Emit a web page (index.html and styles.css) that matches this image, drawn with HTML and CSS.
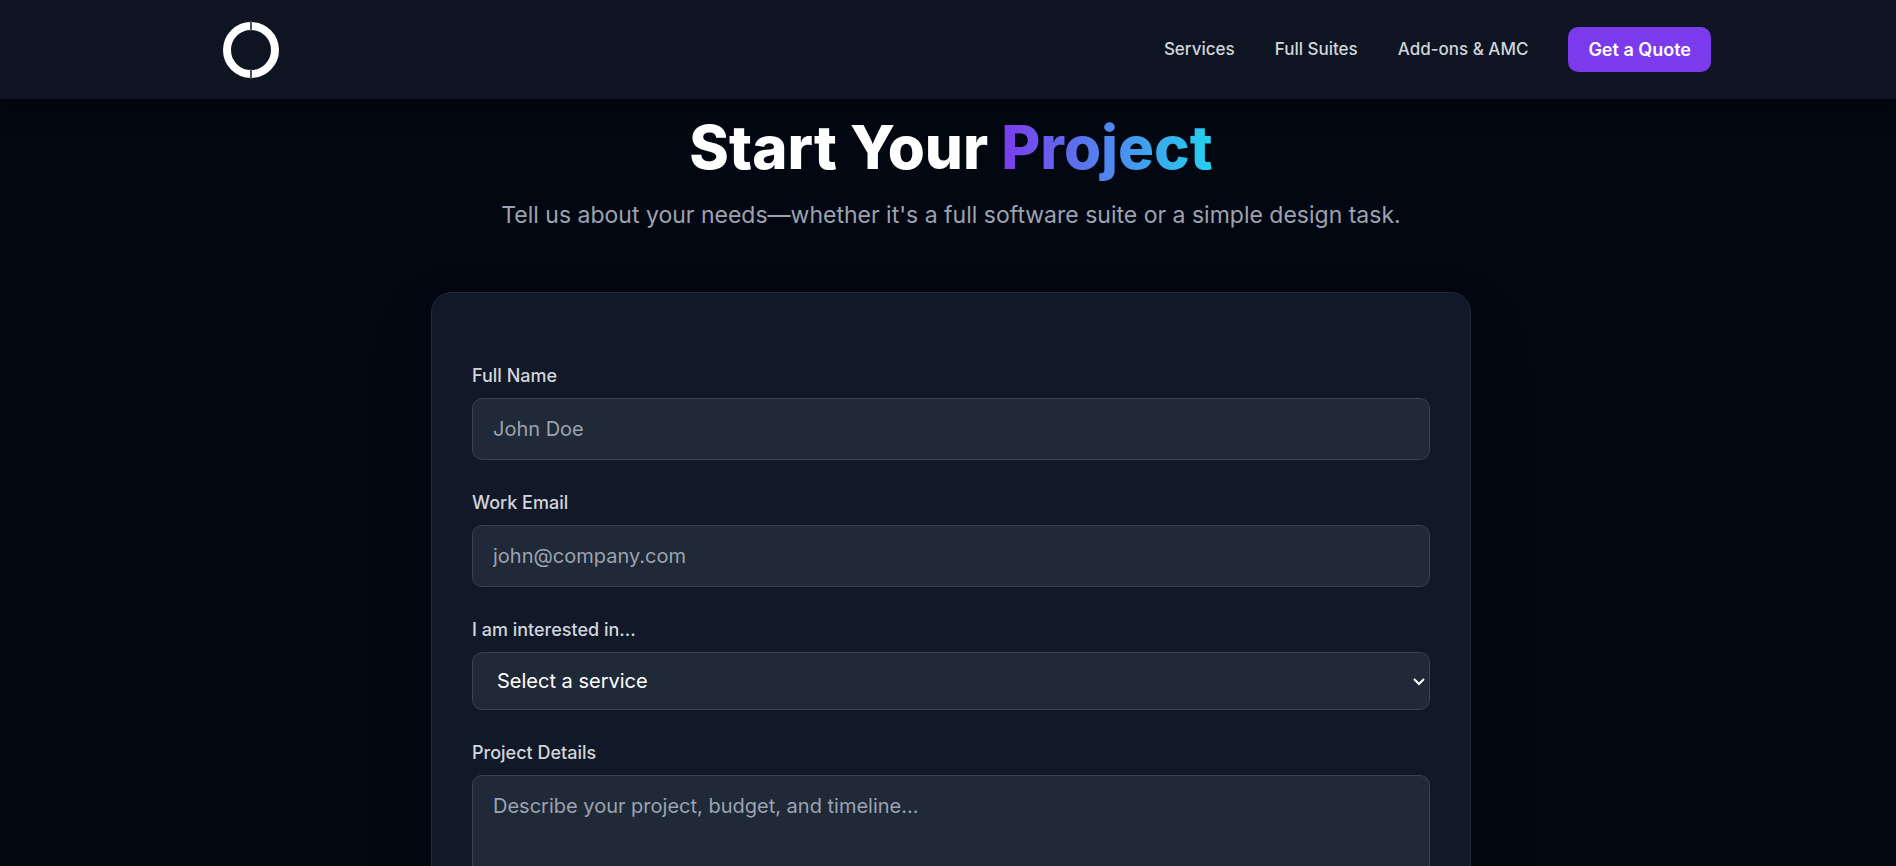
FILE: index.html
```html
<!DOCTYPE html>
<html lang="en">
<head>
    <meta charset="UTF-8">
    <meta name="viewport" content="width=device-width, initial-scale=1.0">
    <title>Start Your Project</title>
    <link rel="stylesheet" href="styles.css">
</head>
<body>
    <header class="navbar">
        <div class="nav-inner">
            <a href="#" class="logo" aria-label="Home">
                <svg viewBox="0 0 58 58" width="58" height="58">
                    <circle cx="29" cy="29" r="24" fill="none" stroke="#fff" stroke-width="8"/>
                    <path d="M29 0v10M29 48v10" stroke="#4b505a" stroke-width="2"/>
                </svg>
            </a>
            <nav class="nav-links">
                <a href="#services">Services</a>
                <a href="#suites">Full Suites</a>
                <a href="#addons">Add-ons &amp; AMC</a>
                <a href="#quote" class="btn-quote">Get a Quote</a>
            </nav>
        </div>
    </header>

    <main class="page">
        <div class="intro">
            <h1>Start Your <span class="gradient-text">Project</span></h1>
            <p>Tell us about your needs—whether it's a full software suite or a simple design task.</p>
        </div>

        <form id="quote" class="card">
            <div class="field">
                <label for="name">Full Name</label>
                <input type="text" id="name" placeholder="John Doe" required>
            </div>
            <div class="field">
                <label for="email">Work Email</label>
                <input type="email" id="email" placeholder="john@company.com" required>
            </div>
            <div class="field">
                <label for="service">I am interested in...</label>
                <div class="select-wrap">
                    <select id="service">
                        <option>Select a service</option>
                    </select>
                    <svg class="chevron" viewBox="0 0 12 8" width="12" height="8">
                        <path d="M1 1l5 5 5-5" fill="none" stroke="#fff" stroke-width="2"/>
                    </svg>
                </div>
            </div>
            <div class="field">
                <label for="details">Project Details</label>
                <textarea id="details" rows="4" placeholder="Describe your project, budget, and timeline..."></textarea>
            </div>
        </form>
    </main>
</body>
</html>
```

FILE: styles.css
```css
* {
    margin: 0;
    padding: 0;
    box-sizing: border-box;
}

html {
    scrollbar-width: none;
}

body {
    font-family: Inter, sans-serif;
    background-color: #030712;
    color: #fff;
}

.navbar {
    background-color: #0e1421;
    padding-left: 6px;
    box-shadow: 0 12px 20px rgba(0, 0, 0, 0.3);
}

.nav-inner {
    display: flex;
    justify-content: space-between;
    align-items: center;
    max-width: 1600px;
    height: 99px;
    margin: 0 auto;
    padding: 0 40px;
}

.logo {
    display: flex;
    justify-content: center;
    width: 120px;
}

.nav-links {
    display: flex;
    align-items: center;
    gap: 40px;
}

.nav-links a {
    color: #d1d5db;
    font-size: 17px;
    line-height: 27px;
    font-weight: 500;
    text-decoration: none;
}

.nav-links .btn-quote {
    padding: 10px 20px;
    background-color: #7c3aed;
    border-radius: 10px;
    color: #fff;
    font-size: 18px;
    line-height: 25px;
    font-weight: 600;
}

.page {
    padding: 18px 0 60px 6px;
}

.intro {
    margin-bottom: 58px;
    text-align: center;
}

h1 {
    margin-bottom: 20px;
    font-size: 60px;
    line-height: 60px;
    font-weight: 800;
}

.gradient-text {
    background: linear-gradient(to right, #7c3aed, #22d3ee);
    background-clip: text;
    -webkit-background-clip: text;
    color: transparent;
}

.intro p {
    color: #9ca3af;
    font-size: 23px;
    line-height: 37px;
}

.card {
    display: flex;
    flex-direction: column;
    gap: 30px;
    max-width: 1040px;
    margin: 0 auto;
    padding: 70px 40px 40px;
    background-color: #111827;
    border: 1px solid #1f2937;
    border-radius: 20px;
    box-shadow: 0 30px 60px rgba(0, 0, 0, 0.2);
}

.field {
    display: flex;
    flex-direction: column;
    gap: 10px;
}

label {
    color: #d1d5db;
    font-size: 18px;
    line-height: 25px;
    font-weight: 500;
}

input, select, textarea {
    width: 100%;
    padding: 15px 20px;
    background-color: #1f2937;
    border: 1px solid #374151;
    border-radius: 10px;
    color: #fff;
    font-family: inherit;
    font-size: 20px;
    line-height: 30px;
}

.select-wrap {
    display: flex;
    position: relative;
}

select {
    height: 58px;
    padding: 0 24px;
    appearance: none;
}

.chevron {
    position: absolute;
    top: 26px;
    right: 5px;
    pointer-events: none;
}

textarea {
    resize: none;
}

::placeholder {
    color: #9ca3af;
}
```
